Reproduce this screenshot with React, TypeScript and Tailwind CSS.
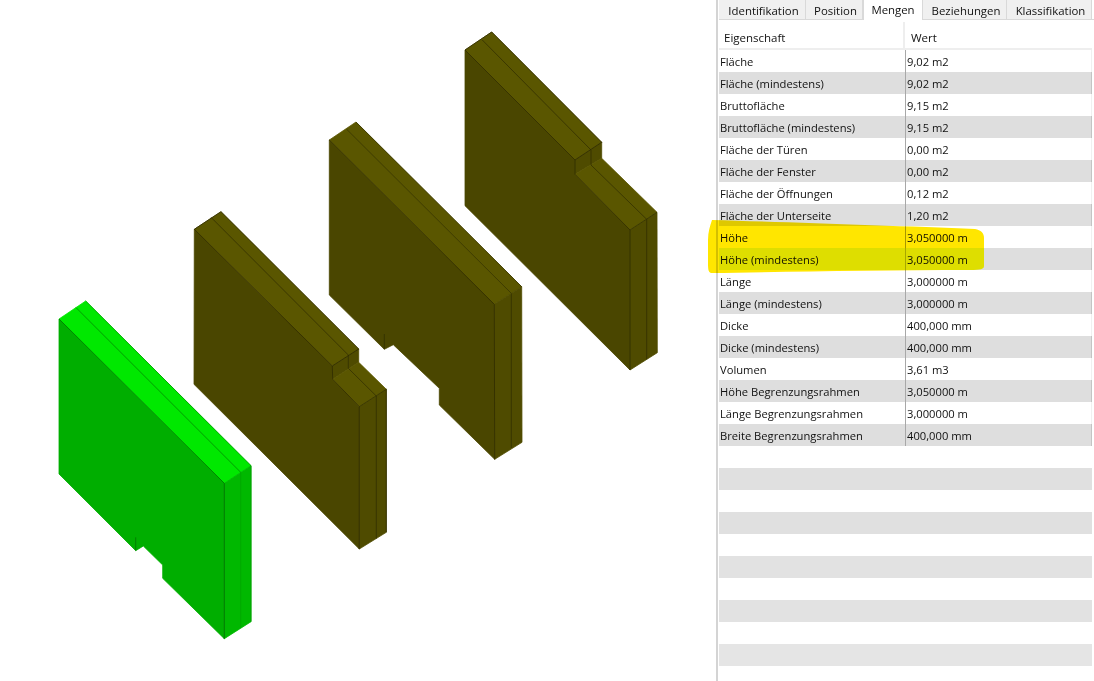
import React from "react";

const font = { fontFamily: '"Open Sans","Noto Sans",sans-serif' };

const rows: [string, string][] = [
  ["Fläche", "9,02 m2"],
  ["Fläche (mindestens)", "9,02 m2"],
  ["Bruttofläche", "9,15 m2"],
  ["Bruttofläche (mindestens)", "9,15 m2"],
  ["Fläche der Türen", "0,00 m2"],
  ["Fläche der Fenster", "0,00 m2"],
  ["Fläche der Öffnungen", "0,12 m2"],
  ["Fläche der Unterseite", "1,20 m2"],
  ["Höhe", "3,050000 m"],
  ["Höhe (mindestens)", "3,050000 m"],
  ["Länge", "3,000000 m"],
  ["Länge (mindestens)", "3,000000 m"],
  ["Dicke", "400,000 mm"],
  ["Dicke (mindestens)", "400,000 mm"],
  ["Volumen", "3,61 m3"],
  ["Höhe Begrenzungsrahmen", "3,050000 m"],
  ["Länge Begrenzungsrahmen", "3,000000 m"],
  ["Breite Begrenzungsrahmen", "400,000 mm"],
];

type Pal = { top: string; front: string; side: string; edge: string; mid: string; back: string; sideMid: string };
const olive: Pal = { top: "#5a5600", front: "#4a4600", side: "#4f4b00", edge: "#2e2b00", mid: "#2e2b00", back: "#3a3700", sideMid: "#2e2b00" };
const green: Pal = { top: "#00e800", front: "#00ae00", side: "#00b800", edge: "#006a00", mid: "#006a00", back: "#009a00", sideMid: "#00a000" };

function BottomNotched({ p, pts }: { p: Pal; pts: Record<string, string> }) {
  return (
    <g strokeWidth={0.8} strokeLinejoin="round">
      <polygon points={pts.front} fill={p.front} stroke={p.front} />
      <polygon points={pts.top} fill={p.top} stroke={p.top} />
      <polygon points={pts.side} fill={p.side} stroke={p.side} />
      <polyline points={pts.edges} fill="none" stroke={p.edge} />
      <polyline points={pts.back} fill="none" stroke={p.back} />
      <polyline points={pts.mid} fill="none" stroke={p.mid} strokeWidth={0.6} />
      <polyline points={pts.sideMid} fill="none" stroke={p.sideMid} strokeWidth={0.7} />
      <polyline points={pts.notch} fill="none" stroke={p.edge} strokeWidth={0.7} />
    </g>
  );
}

function TopNotched({ p, pts }: { p: Pal; pts: Record<string, string> }) {
  return (
    <g strokeWidth={0.8} strokeLinejoin="round">
      <polygon points={pts.front} fill={p.front} stroke={p.front} />
      <polygon points={pts.top} fill={p.top} stroke={p.top} />
      <polygon points={pts.step} fill={p.side} stroke={p.side} />
      <polygon points={pts.lower} fill={p.top} stroke={p.top} />
      <polygon points={pts.side} fill={p.side} stroke={p.side} />
      <polyline points={pts.edges} fill="none" stroke={p.edge} />
      <polyline points={pts.edges2} fill="none" stroke={p.edge} />
      <polyline points={pts.mid} fill="none" stroke={p.mid} strokeWidth={0.7} />
    </g>
  );
}

function Walls() {
  return (
    <svg width={716} height={681} viewBox="0 0 716 681" className="block">
      <BottomNotched
        p={green}
        pts={{
          front: "59,319 224.3,483.3 224.3,638.7 162.7,578.3 162.7,565 143.3,546 135.7,550.7 59,474",
          top: "59,319 85.7,301 251,465.7 224.3,483.3",
          side: "224.3,483.3 251,465.7 251,621.7 224.3,638.7",
          edges: "59,319 224.3,483.3 224.3,638.7",
          back: "85.7,301 251,465.7 251,621.7",
          mid: "75.7,307.3 240.7,472.3",
          sideMid: "240.7,472.3 240.7,628",
          notch: "135.7,537.3 135.7,550.7",
        }}
      />
      <TopNotched
        p={olive}
        pts={{
          front: "194.3,229.3 332.3,366 332.7,379.3 359.3,406.7 359.3,549 194,384.3",
          top: "194.3,229.3 221,211.7 358.7,349 332.3,366",
          step: "332.3,366 358.7,349 358.7,362.3 332.7,379.3",
          lower: "332.7,379.3 358.7,362.3 386.3,389.3 359.3,406.7",
          side: "359.3,406.7 386.3,389.3 386.3,532.3 359.3,549",
          edges: "194.3,229.3 332.3,366 358.7,349 221,211.7 194.3,229.3",
          edges2: "332.3,366 332.7,379.3 359.3,406.7 359.3,549",
          mid: "211,217.3 348.3,355 348.3,368.3 376.3,396 376.3,538.7",
        }}
      />
      <line x1={359.3} y1={406.7} x2={386.3} y2={389.3} stroke="#2e2b00" strokeWidth={0.6} />
      <line x1={386.3} y1={389.3} x2={386.3} y2={532.3} stroke="#2e2b00" strokeWidth={0.8} />
      <BottomNotched
        p={olive}
        pts={{
          front: "329.3,140 494.3,304.3 494.7,459.3 439.3,405 439.3,388.3 393.3,344.7 384.3,349.3 329.3,295",
          top: "329.3,140 356,122 521.7,286.7 494.3,304.3",
          side: "494.3,304.3 521.7,286.7 522,442.3 494.7,459.3",
          edges: "329.3,140 494.3,304.3 494.7,459.3",
          back: "356,122 521.7,286.7",
          mid: "346.7,129.3 511.3,293.3",
          sideMid: "511.3,293.3 511.3,448",
          notch: "384.3,334 384.3,349.3",
        }}
      />
      <TopNotched
        p={olive}
        pts={{
          front: "465,50 575,160 575,174.3 630,230 630,370 465,205.7",
          top: "465,50 491.7,32 601.7,142.3 575,160",
          step: "575,160 601.7,142.3 601.7,158.3 575,174.3",
          lower: "575,174.3 601.7,158.3 657,212.3 630,230",
          side: "630,230 657,212.3 657.3,352.7 630,370",
          edges: "465,50 575,160 601.7,142.3 491.7,32 465,50",
          edges2: "575,160 575,174.3 630,230 630,370",
          mid: "482.3,40 591,150 591,165 646.7,219.3 646.7,359.3",
        }}
      />
      <line x1={630} y1={230} x2={657} y2={212.3} stroke="#2e2b00" strokeWidth={0.6} />
    </svg>
  );
}

const tabs = [
  { t: "Identifikation", w: "w-[87px]" },
  { t: "Position", w: "w-[57px]" },
  { t: "Mengen", w: "w-[60px]", active: true },
  { t: "Beziehungen", w: "w-[84px]" },
  { t: "Klassifikation", w: "w-[85px]" },
];

function Panel() {
  const blanks = Array.from({ length: 11 });
  return (
    <div className="flex w-[378px] flex-col border-l-2 border-[#d4d4d4] text-[11.2px] text-[#111]" style={font}>
      <div className="ml-[1px] flex h-[20px] border-b border-[#d9d9d9] text-[11.4px]">
        {tabs.map((x) => (
          <div
            key={x.t}
            className={
              x.active
                ? `${x.w} flex h-[20px] items-start justify-center border-x border-[#d9d9d9] bg-white pt-[1px] leading-[18px]`
                : `${x.w} flex h-[19px] items-start justify-center border-r border-[#d9d9d9] bg-[#f0f0f0] pl-[3px] pt-[2px] leading-[18px]`
            }
          >
            {x.t}
          </div>
        ))}
      </div>
      <div className="ml-[1px] w-[373px]">
        <div className="flex h-[30px] border-b-2 border-[#eeeeee] text-[11.5px]">
          <div className="mt-[2px] w-[186px] border-r-2 border-[#eeeeee] pl-[5px] pt-[5px] leading-[21px]">Eigenschaft</div>
          <div className="pl-[6px] pt-[7px] leading-[21px]">Wert</div>
        </div>
        {rows.map(([k, v], i) => (
          <div
            key={k}
            className={
              i % 2
                ? "flex h-[22px] items-center border-r border-[#c4c4c4] bg-[#dedede]"
                : "flex h-[22px] items-center border-r border-[#f0f0f0] bg-white"
            }
          >
            <div className="h-full w-[187px] border-r border-[#a8a8a8] pl-[1px] pt-[1px] leading-[22px]">{k}</div>
            <div className="pl-[1px] pt-[1px] leading-[22px]">{v}</div>
          </div>
        ))}
        {blanks.map((_, i) => (
          <div
            key={i}
            className={
              i % 2 === 0
                ? "h-[22px] bg-white"
                : i < 4
                  ? "h-[22px] bg-[#e0e0e0]"
                  : i < 8
                    ? "h-[22px] bg-[#e2e2e2]"
                    : "h-[22px] bg-[#e5e5e5]"
            }
          />
        ))}
      </div>
    </div>
  );
}

function Highlight() {
  const d =
    "M712,220 C780,222 900,226 975,229 C981,230 984,233 984,238 L984,266 C984,269 981,270 970,270 C880,270 780,272 711,273 C708,272 708,268 708,262 L708,240 C708,232 710,226 712,220 Z";
  return (
    <svg
      width={1094}
      height={681}
      viewBox="0 0 1094 681"
      className="pointer-events-none absolute left-0 top-0 mix-blend-multiply"
    >
      <defs>
        <clipPath id="band">
          <rect x={719} y={248} width={375} height={22} />
        </clipPath>
        <clipPath id="rest">
          <path d="M0,0 H1094 V248 H719 V270 H1094 V681 H0 Z" />
        </clipPath>
      </defs>
      <path d={d} fill="#ffe600" clipPath="url(#rest)" />
      <path d={d} fill="#ffff00" clipPath="url(#band)" />
    </svg>
  );
}

export default function App() {
  return (
    <div className="relative flex h-[681px] w-[1094px] overflow-hidden bg-white">
      <div className="w-[716px] shrink-0">
        <Walls />
      </div>
      <Panel />
      <Highlight />
    </div>
  );
}
